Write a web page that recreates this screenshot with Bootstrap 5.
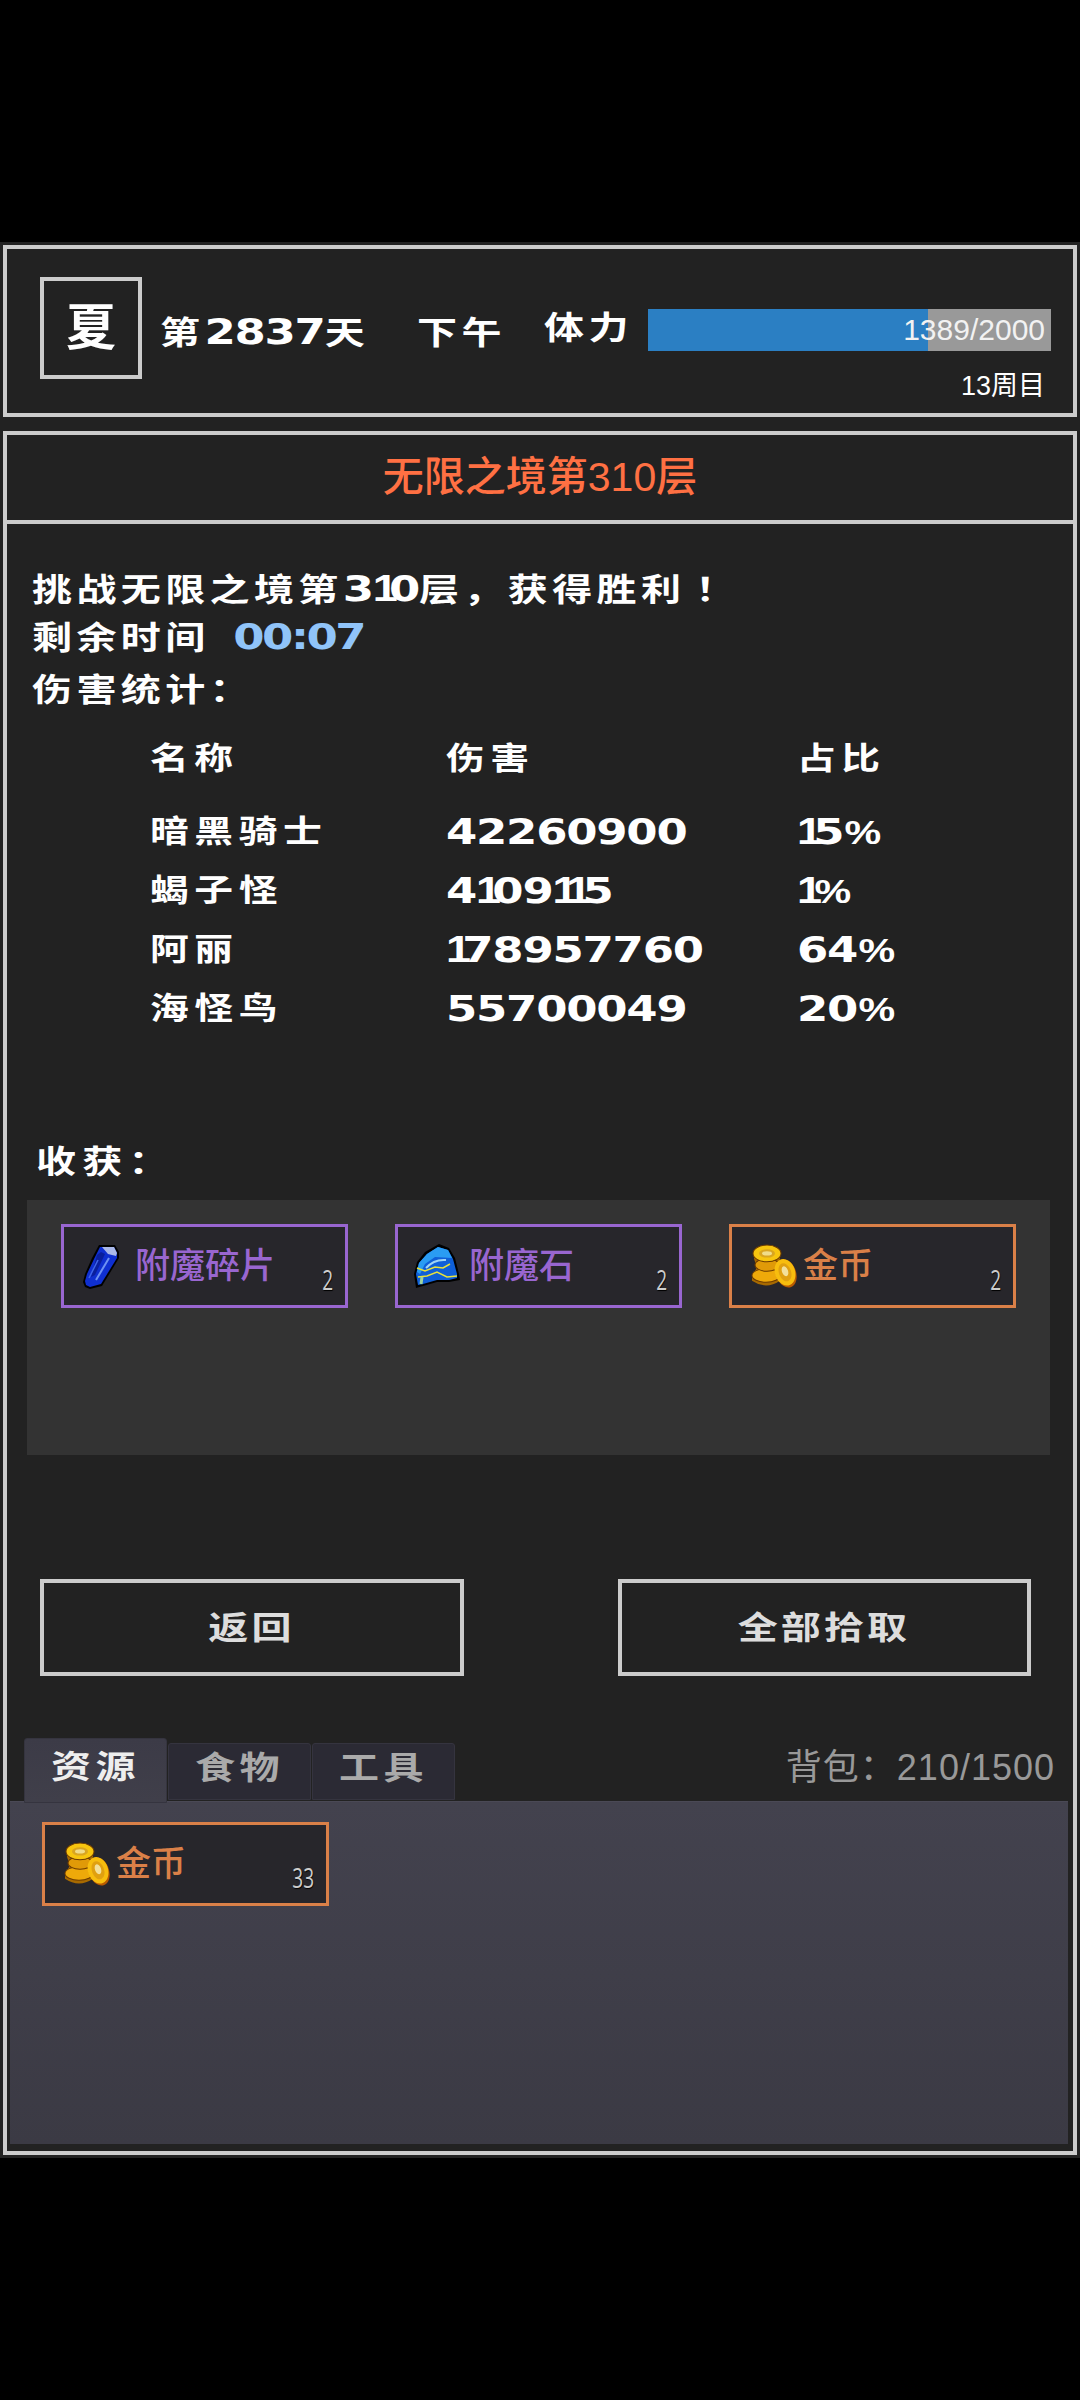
<!DOCTYPE html>
<html lang="zh-CN">
<head>
  <meta charset="UTF-8" />
  <meta name="viewport" content="width=device-width, initial-scale=1" />
  <title>无限之境</title>
  <link href="https://cdn.jsdelivr.net/npm/bootstrap@5.3.3/dist/css/bootstrap.min.css" rel="stylesheet" />
  <style>
    body {
      background-color: #000;
      padding-top: 242px;
      font-family: "Liberation Sans", "Noto Sans CJK SC", sans-serif;
      color: #fff;
    }
    .app-shell {
      background-color: #222;
      height: 1916px;
      padding: 3px;
    }
    .frame {
      border: 4px solid #ccc;
    }
    /* the game's font is wide, so the text gets stretched */
    .wd {
      display: inline-block;
      white-space: nowrap;
      font-size: 32px;
      font-weight: 700;
      line-height: 48px;
      letter-spacing: 3.5px;
      transform: scaleX(1.25);
      transform-origin: left center;
    }
    .wd.mid {
      transform-origin: center center;
    }
    .num {
      font-family: "DejaVu Sans", sans-serif;
      font-weight: 700;
      font-size: 36px;
      letter-spacing: -1px;
    }
    .one {
      font-family: "Liberation Sans", sans-serif;
      letter-spacing: -7px;
    }
    .pct {
      font-family: "Liberation Sans", sans-serif;
      font-size: 33px;
      letter-spacing: 0;
      margin-left: 1px;
    }
    .bang { margin-left: 8px; }

    /* top bar */
    .top-frame {
      height: 172px;
      padding: 28px 22px 0 33px;
    }
    .season {
      width: 102px;
      height: 102px;
      border: 4px solid #ccc;
      font-size: 50px;
      font-weight: 700;
      line-height: 1;
    }
    .top-right {
      padding-top: 25px;
      margin-left: 18px;
    }
    .day-text { width: 257px; margin-top: 6px; }
    .noon-text { width: 127px; margin-top: 6px; }
    .power-text { width: 104px; margin-top: -4px; }
    .power-bar {
      width: 403px;
      height: 42px;
      background-color: #999;
      border-radius: 0;
      position: relative;
    }
    .power-bar .progress-bar {
      background-color: #2b7fc3;
    }
    .power-label {
      position: absolute;
      right: 6px;
      top: 0;
      font-size: 30px;
      line-height: 42px;
      color: #f2f2f2;
    }
    .week-text {
      font-size: 27px;
      line-height: 36px;
      margin-top: 11px;
      padding-right: 6px;
    }

    /* main frame */
    .main-frame {
      height: 1724px;
      margin-top: 14px;
    }
    .floor-title {
      height: 89px;
      border-bottom: 4px solid #ccc;
      color: #ff7043;
      font-size: 41px;
      font-weight: 500;
    }
    .report {
      padding: 41px 0 0 25px;
    }
    .report-line { height: 48px; }
    .report-gap { margin-top: 5px; }
    .time-left { color: #90c4f9; margin-left: 19px; letter-spacing: -2px; }
    .dmg-table {
      margin: 21px 0 0 118px;
    }
    .dmg-row {
      height: 48px;
      margin-top: 11px;
    }
    .dmg-head { margin-bottom: 25px; margin-top: 0; }
    .dmg-name { width: 296px; }
    .dmg-value { width: 351px; }
    .dmg-row .wd { font-size: 31px; letter-spacing: 4.5px; }
    .dmg-row .wd.num { font-size: 36px; letter-spacing: -1px; }
    .dmg-row .one { letter-spacing: -7px; }
    .dmg-row .pct { letter-spacing: 0; }
    .loot-title { margin: 105px 0 14px 29px; height: 48px; }
    .loot-title .wd { letter-spacing: 5px; }
    .loot-box {
      width: 1023px;
      height: 255px;
      margin-left: 20px;
      background-color: #333;
      padding: 24px 34px;
      gap: 47px;
    }
    .slot {
      width: 287px;
      height: 84px;
      border: 3px solid;
      padding-left: 15px;
      background-color: #27262b;
      font-size: 35px;
      font-weight: 500;
    }
    .slot-purple { border-color: #9966d0; color: #9966d0; }
    .slot-orange { border-color: #da8048; color: #da8048; }
    .slot-icon {
      width: 46px;
      margin-right: 10px;
      flex-shrink: 0;
    }
    .slot-icon svg { display: block; }
    .slot-count {
      position: absolute;
      right: 12px;
      bottom: 10px;
      color: #ccc;
      font-family: "Open Sans", sans-serif;
      font-weight: 400;
      font-size: 28px;
      line-height: 32px;
      text-shadow: 1px 1px 1px #000;
      transform: scaleX(0.68);
      transform-origin: right center;
    }

    .btn-row {
      margin: 124px 0 0 33px;
      gap: 154px;
    }
    .act-btn {
      height: 97px;
      border: 4px solid #ccc;
      border-radius: 0;
      color: #ddd;
      padding: 0;
      background: none;
    }
    .act-back { width: 424px; }
    .act-pick { width: 413px; }
    .act-btn .wd { letter-spacing: 2.5px; }

    /* bag */
    .bag-head {
      height: 63px;
      margin: 62px 18px 0 17px;
    }
    .bag-tab {
      width: 143px;
      height: 57px;
      margin: 5px 1px 0 0;
      background-color: #2b2a34;
      border: 1px solid #35343f;
      border-radius: 3px 3px 0 0;
      color: #aaa;
    }
    .bag-tab.on {
      height: 65px;
      margin-top: 0;
      background: linear-gradient(#3c3b47, #403f4a);
      color: #eee;
      position: relative;
      z-index: 2;
    }
    .bag-size {
      color: #999;
      font-size: 36px;
      line-height: 60px;
      letter-spacing: 1px;
    }
    .bag-box {
      width: 1058px;
      height: 343px;
      margin-left: 3px;
      padding: 20px 32px;
      background: linear-gradient(#43424e, #3b3a44);
      border-top: 1px solid #4a4955;
    }
  </style>
</head>
<body>
  <svg width="0" height="0" class="position-absolute">
    <symbol id="ico-shard" viewBox="0 0 37 45">
      <polygon points="16,1 32,1 36,8 36,14 19,42 7,45 2,43 0,38 2,30 9,14" fill="#000" />
      <polygon points="17,3 31,3 34,9 34,14 18,40 7,43 3,41 2,37 4,30 11,15" fill="#0f2fd0" />
      <polygon points="19,3 31,3 34,9 33,12 25,10" fill="#aab8e8" />
      <polygon points="14,11 18,8 22,10 12,31 8,33" fill="#0a1f9c" />
      <path d="M26 14 L13 36" stroke="#6f92f2" stroke-width="2" fill="none" />
      <path d="M15 16 L6 34" stroke="#3f66e8" stroke-width="1.5" fill="none" />
    </symbol>
    <symbol id="ico-stone" viewBox="0 0 47 45">
      <path d="M26 0 L36 4 L42 14 L46 30 L47 36 L36 38 L24 38 L10 42 L3 44 L1 30 L4 18 L12 8 Z" fill="#000" />
      <path d="M25 3 L35 6 L40 15 L44 30 L44 34 L36 36 L24 36 L10 40 L5 41 L3 30 L6 19 L14 10 Z" fill="#0f5fd8" />
      <path d="M25 3 L35 6 L39 14 L22 13 L12 20 L7 30 L4 28 L6 19 L14 10 Z" fill="#2a9cf2" />
      <path d="M13 24 Q21 15 33 16" stroke="#9fd4f5" stroke-width="2" fill="none" />
      <path d="M4 24 L12 27 L22 23 L30 24 L37 20" stroke="#e8e23c" stroke-width="1.5" fill="none" />
      <path d="M5 33 L14 32 L24 28 L34 33 L44 32" stroke="#e8e23c" stroke-width="1.5" fill="none" />
      <path d="M8 40 L9 33" stroke="#9fd4a0" stroke-width="3" fill="none" />
    </symbol>
    <symbol id="ico-coins" viewBox="0 0 46 42" preserveAspectRatio="none">
      <path d="M1 30 V35 Q15 44 29 35 V30 L27 24 V20 L29 14 V8 H3 V14 L5 20 V24 Z" fill="#a86a00" />
      <g stroke="#6b3a00" stroke-width="1">
        <ellipse cx="15" cy="30" rx="14" ry="6.5" fill="#eea90a" />
        <ellipse cx="16" cy="20" rx="12" ry="6" fill="#e09a08" />
        <ellipse cx="16" cy="9" rx="14" ry="8" fill="#f7c50f" />
      </g>
      <ellipse cx="16" cy="9" rx="8" ry="4" fill="#d9a520" />
      <ellipse cx="16" cy="9" rx="5" ry="2" fill="#f0dc8a" />
      <ellipse cx="35" cy="28" rx="10" ry="14" transform="rotate(-22 35 28)" fill="#b85a00" />
      <ellipse cx="34" cy="27" rx="10" ry="13" transform="rotate(-22 34 27)" fill="#f7bd0e" />
      <ellipse cx="34" cy="27" rx="6" ry="9" transform="rotate(-22 34 27)" fill="#e0a010" />
      <ellipse cx="34" cy="26" rx="3" ry="5" transform="rotate(-22 34 26)" fill="#f3e09a" />
    </symbol>
  </svg>

  <div class="app-shell">
    <div class="frame top-frame d-flex">
      <div class="season d-flex align-items-center justify-content-center flex-shrink-0">夏</div>
      <div class="top-right">
        <div class="d-flex align-items-center">
          <div class="day-text"><span class="wd">第<span class="num">2837</span>天</span></div>
          <div class="noon-text"><span class="wd">下午</span></div>
          <div class="power-text"><span class="wd">体力</span></div>
          <div class="progress power-bar">
            <div class="progress-bar" style="width: 69.45%"></div>
            <span class="power-label">1389/2000</span>
          </div>
        </div>
        <div class="week-text text-end">13周目</div>
      </div>
    </div>

    <div class="frame main-frame">
      <div class="floor-title d-flex align-items-center justify-content-center">无限之境第310层</div>

      <div class="report">
        <div class="report-line"><span class="wd">挑战无限之境第<span class="num">3<span class="one">1</span>0</span>层，获得胜利<span class="bang">！</span></span></div>
        <div class="report-line"><span class="wd">剩余时间<span class="num time-left">00:07</span></span></div>
        <div class="report-line report-gap"><span class="wd">伤害统计：</span></div>

        <div class="dmg-table">
          <div class="dmg-row dmg-head d-flex">
            <div class="dmg-name"><span class="wd">名称</span></div>
            <div class="dmg-value"><span class="wd">伤害</span></div>
            <div><span class="wd">占比</span></div>
          </div>
          <div class="dmg-row d-flex">
            <div class="dmg-name"><span class="wd">暗黑骑士</span></div>
            <div class="dmg-value"><span class="wd num">42260900</span></div>
            <div><span class="wd num"><span class="one">1</span>5<span class="pct">%</span></span></div>
          </div>
          <div class="dmg-row d-flex">
            <div class="dmg-name"><span class="wd">蝎子怪</span></div>
            <div class="dmg-value"><span class="wd num">4<span class="one">1</span>09<span class="one">1</span><span class="one">1</span>5</span></div>
            <div><span class="wd num"><span class="one">1</span><span class="pct">%</span></span></div>
          </div>
          <div class="dmg-row d-flex">
            <div class="dmg-name"><span class="wd">阿丽</span></div>
            <div class="dmg-value"><span class="wd num"><span class="one">1</span>78957760</span></div>
            <div><span class="wd num">64<span class="pct">%</span></span></div>
          </div>
          <div class="dmg-row d-flex">
            <div class="dmg-name"><span class="wd">海怪鸟</span></div>
            <div class="dmg-value"><span class="wd num">55700049</span></div>
            <div><span class="wd num">20<span class="pct">%</span></span></div>
          </div>
        </div>
      </div>

      <div class="loot-title"><span class="wd">收获：</span></div>
      <div class="loot-box d-flex align-items-start">
        <div class="slot slot-purple d-flex align-items-center position-relative">
          <div class="slot-icon"><svg class="ms-1" width="37" height="45"><use href="#ico-shard" /></svg></div>
          <span>附魔碎片</span>
          <span class="slot-count">2</span>
        </div>
        <div class="slot slot-purple d-flex align-items-center position-relative">
          <div class="slot-icon"><svg width="47" height="45"><use href="#ico-stone" /></svg></div>
          <span>附魔石</span>
          <span class="slot-count">2</span>
        </div>
        <div class="slot slot-orange d-flex align-items-center position-relative">
          <div class="slot-icon"><svg class="ms-1" width="46" height="44"><use href="#ico-coins" /></svg></div>
          <span>金币</span>
          <span class="slot-count">2</span>
        </div>
      </div>

      <div class="btn-row d-flex">
        <button class="btn act-btn act-back"><span class="wd mid">返回</span></button>
        <button class="btn act-btn act-pick"><span class="wd mid">全部拾取</span></button>
      </div>

      <div class="bag-head d-flex justify-content-between">
        <div class="d-flex align-items-start">
          <div class="bag-tab on d-flex justify-content-center pt-1"><span class="wd mid">资源</span></div>
          <div class="bag-tab d-flex justify-content-center"><span class="wd mid">食物</span></div>
          <div class="bag-tab d-flex justify-content-center"><span class="wd mid">工具</span></div>
        </div>
        <div class="bag-size">背包：210/1500</div>
      </div>
      <div class="bag-box">
        <div class="slot slot-orange d-flex align-items-center position-relative">
          <div class="slot-icon"><svg class="ms-1" width="46" height="44"><use href="#ico-coins" /></svg></div>
          <span>金币</span>
          <span class="slot-count">33</span>
        </div>
      </div>
    </div>
  </div>

  <script src="https://cdn.jsdelivr.net/npm/bootstrap@5.3.3/dist/js/bootstrap.bundle.min.js"></script>
</body>
</html>
